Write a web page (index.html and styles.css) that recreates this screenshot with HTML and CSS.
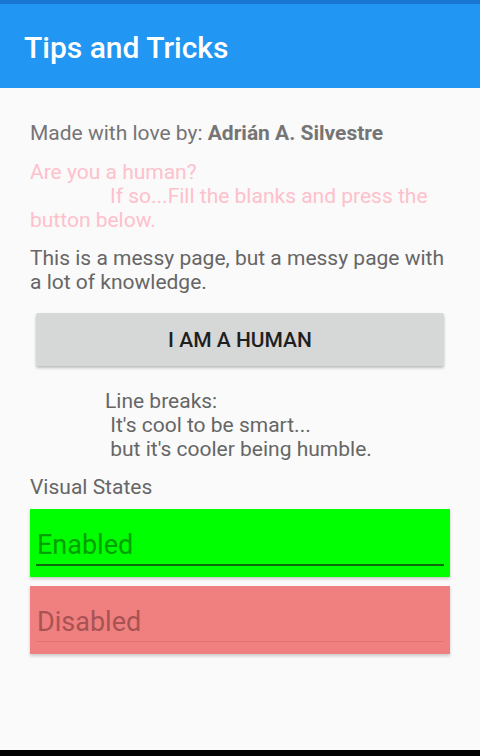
FILE: index.html
```html
<!DOCTYPE html>
<html>
<head>
<meta charset="utf-8">
<link rel="stylesheet" href="styles.css">
</head>
<body>
<div class="status"></div>
<header class="appbar">Tips and Tricks</header>
<main class="content">
  <p class="credit">Made with love by: <b>Adrián A. Silvestre</b></p>
  <p class="pink">Are you a human?<br><span class="indent"></span>If so...Fill the blanks and press the button below.</p>
  <p class="messy">This is a messy page, but a messy page with a lot of knowledge.</p>
  <button class="human">I AM A HUMAN</button>
  <p class="breaks">Line breaks:
 It's cool to be smart...
 but it's cooler being humble.</p>
  <p class="states">Visual States</p>
  <div class="entry enabled"><span class="ph">Enabled</span></div>
  <div class="entry disabled"><span class="ph">Disabled</span></div>
</main>
<div class="navbar"></div>
</body>
</html>
```
FILE: styles.css
```css
html, body {
  margin: 0;
  padding: 0;
}
body {
  width: 480px;
  height: 756px;
  background: #fafafa;
  font-family: Roboto, "Noto Sans", sans-serif;
  display: flex;
  flex-direction: column;
  overflow: hidden;
}
.status {
  height: 4px;
  background: #1976d2;
}
.appbar {
  height: 84px;
  background: #2196f3;
  color: #fff;
  font-size: 30px;
  font-weight: 500;
  padding-left: 24px;
  display: flex;
  align-items: center;
  box-sizing: border-box;
  padding-top: 2px;
}
.content {
  flex: 1;
  padding: 33px 30px 0 30px;
  display: flex;
  flex-direction: column;
}
.content p {
  margin: 0;
  font-size: 21px;
  line-height: 24px;
}
.credit {
  color: #757575;
}
.credit b {
  font-weight: 700;
}
.pink {
  color: #ffc0cb;
  margin-top: 15px !important;
}
.indent {
  display: inline-block;
  width: 80px;
}
.messy {
  color: #666;
  margin-top: 14px !important;
}
.human {
  margin: 19px 6px 0 6px;
  height: 53px;
  border: none;
  border-radius: 2px;
  background: #d6d7d7;
  box-shadow: 0 2px 3px rgba(0,0,0,0.25);
  font-family: Roboto, sans-serif;
  font-size: 21px;
  font-weight: 500;
  color: #1f1f1f;
}
.breaks {
  white-space: pre;
  color: #666;
  margin-top: 23px !important;
  padding-left: 75px;
}
.states {
  color: #666;
  margin-top: 14px !important;
}
.entry {
  height: 68px;
  box-shadow: 0 2px 3px rgba(0,0,0,0.2);
  padding: 0 6px;
  display: flex;
  flex-direction: column;
  justify-content: flex-end;
  box-sizing: border-box;
}
.ph {
  font-size: 27px;
  line-height: 32px;
  padding-left: 1px;
  padding-bottom: 3px;
  border-bottom: 2px solid;
  margin-bottom: 11px;
}
.enabled {
  margin-top: 10px;
  background: #00ff00;
}
.enabled .ph {
  color: #00a000;
  border-color: #0d6b0d;
}
.disabled {
  margin-top: 9px;
  background: #f08080;
}
.disabled .ph {
  color: #a85353;
  border-bottom: 1px solid #e07474;
  margin-bottom: 12px;
}
.navbar {
  height: 6px;
  background: #000;
}
```
